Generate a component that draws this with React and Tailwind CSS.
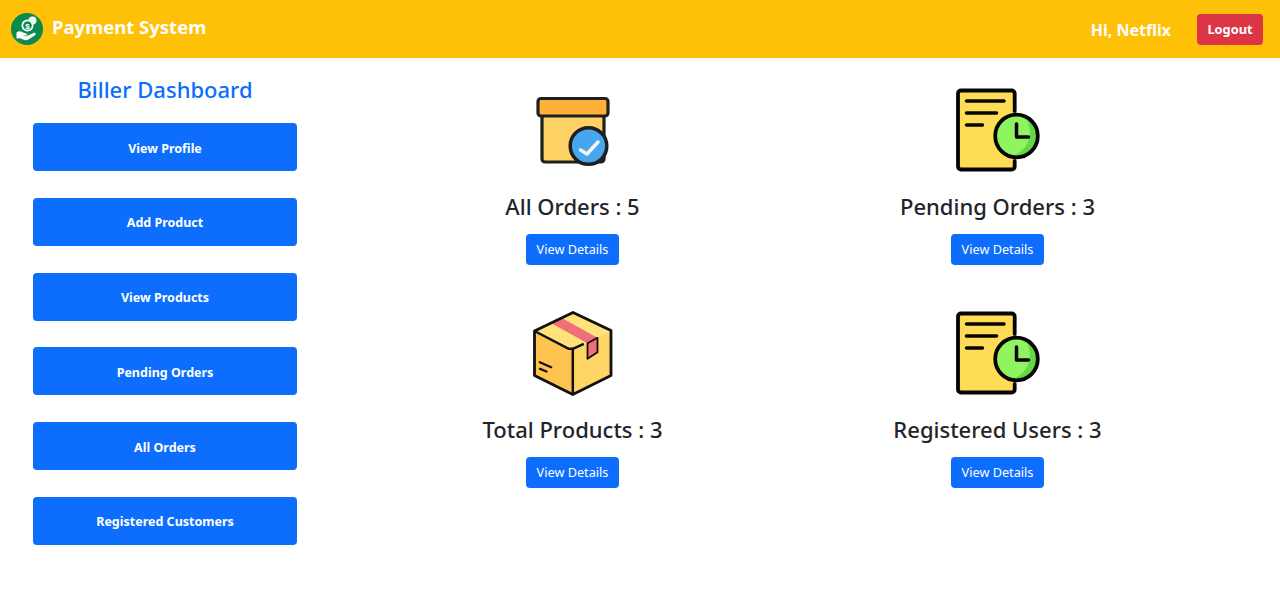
const font = { fontFamily: '"Noto Sans", sans-serif' };

function Logo() {
  return (
    <svg width="32" height="32" viewBox="0 0 32 32" className="shrink-0">
      <circle cx="16" cy="16" r="16" fill="#0b8a4d" />
      <circle cx="21.500" cy="7.500" r="4" fill="#eef7f1" />
      <circle cx="16.500" cy="12.500" r="6" fill="#ffffff" />
      <circle cx="16.500" cy="12.500" r="4.300" fill="#0b8a4d" />
      <text x="16.500" y="15.600" textAnchor="middle" fontSize="8" fontWeight="700" fill="#fff" fontFamily="Liberation Sans">$</text>
      <path d="M5.500 19.500c2-1.600 4.200-1.400 6-.2l3.400 1.100c1.600.5 1.400 2.300-.2 2.200l-3.200-.2 3.600.8 7.400-3.200c1.800-.7 3 1.100 1.500 2.200l-6.500 4.300c-1.300.8-2.500.9-4 .4l-4.500-1.600-3.500.2z" fill="#fff" />
    </svg>
  );
}

function CheckBox() {
  return (
    <svg width="90" height="90" viewBox="0 0 90 90">
      <path d="M14 30h62v44a3 3 0 0 1-3 3H17a3 3 0 0 1-3-3z" fill="#ffd266" stroke="#1f1f1f" strokeWidth="3.200" strokeLinejoin="round" />
      <rect x="10" y="13.500" width="70" height="17.500" rx="3" fill="#ffb03b" stroke="#1f1f1f" strokeWidth="3.200" />
      <circle cx="60.500" cy="61" r="18.300" fill="#46a6ee" stroke="#1f1f1f" strokeWidth="3.500" />
      <path d="M52.500 65l6.500 4 11-12" fill="none" stroke="#f5f5f5" strokeWidth="3.500" strokeLinecap="round" strokeLinejoin="round" />
    </svg>
  );
}

function DocClock() {
  return (
    <svg width="90" height="90" viewBox="0 0 90 90">
      <path d="M5 8.500a3 3 0 0 1 3-3h51a3 3 0 0 1 3 3v73a3 3 0 0 1-3 3H8a3 3 0 0 1-3-3z" fill="#ffdc55" />
      <path d="M61.700 26V8.500a3 3 0 0 0-3-3H8a3 3 0 0 0-3 3v73a3 3 0 0 0 3 3h50.700a3 3 0 0 0 3-3V76" fill="none" stroke="#050505" strokeWidth="3.800" strokeLinecap="round" />
      <path d="M13.500 16h37.500M13.500 28h30M13.500 40h16" fill="none" stroke="#050505" strokeWidth="3.500" strokeLinecap="round" />
      <circle cx="63.500" cy="51" r="21.300" fill="#8ff45f" />
      <path d="M72 32a21.300 21.300 0 0 1-15 39.500a25 25 0 0 0 15-39.500z" fill="#62d845" />
      <circle cx="63.500" cy="51" r="21.300" fill="none" stroke="#050505" strokeWidth="3.800" />
      <path d="M63.500 39v13h12" fill="none" stroke="#050505" strokeWidth="3.500" strokeLinecap="round" strokeLinejoin="round" />
    </svg>
  );
}

function Parcel() {
  return (
    <svg width="90" height="90" viewBox="0 0 90 90">
      <path d="M44.800 41L6.500 23v44.500l38.300 19z" fill="#ffc44f" />
      <path d="M44.800 41L83 22.500v45L44.800 86.500z" fill="#ffd666" />
      <path d="M6.500 23L45 4.500l38 18L44.800 41z" fill="#ffe27a" />
      <path d="M24.200 15.800l10-5.600 35.300 19.600v14.400l-10 6.600V35.200z" fill="#f0707a" />
      <path d="M6.500 23L45 4.500l38 18v45L44.800 86.500l-38.300-19z" fill="none" stroke="#111" strokeWidth="2.800" strokeLinejoin="round" />
      <path d="M6.500 23l34.300 17.800h4v45.700M44.800 40.800l11-5" fill="none" stroke="#111" strokeWidth="2.500" strokeLinejoin="round" />
      <path d="M59.500 35.200v15.600l10-6.600V29.800l-10 5.400z" fill="none" stroke="#111" strokeWidth="1.800" strokeLinejoin="round" />
      <path d="M11.800 54.200l11.400 5M11.800 60.800l6.700 2.700" fill="none" stroke="#111" strokeWidth="2.200" strokeLinecap="round" />
    </svg>
  );
}

const side = ["View Profile", "Add Product", "View Products", "Pending Orders", "All Orders", "Registered Customers"];

const cards = [
  { label: "All Orders : 5", Icon: CheckBox },
  { label: "Pending Orders : 3", Icon: DocClock },
  { label: "Total Products : 3", Icon: Parcel },
  { label: "Registered Users : 3", Icon: DocClock },
];

export default function App() {
  return (
    <div className="min-h-[604px] bg-white text-[#212529]" style={font}>
      <header className="h-[58px] bg-[#ffc107] flex items-center pl-[11px] pr-[17px] text-white">
        <Logo />
        <span className="ml-[9px] mb-[5px] text-[18.500px] font-bold">Payment System</span>
        <span className="ml-auto pt-[2px] text-[16px] font-bold">Hi, Netflix</span>
        <button className="ml-[26px] w-[66px] h-[31px] pt-[2px] rounded-[4px] bg-[#dc3545] text-[12.800px] font-bold text-white">Logout</button>
      </header>
      <main className="flex">
        <aside className="w-[360px] shrink-0 pl-[33px] pr-[63px] pt-[15px]">
          <h2 className="text-[22px] leading-[33px] text-center text-[#0d6efd] font-medium">Biller Dashboard</h2>
          <div className="mt-[17px] flex flex-col gap-[26.750px]">
            {side.map((s) => (
              <button key={s} className="h-[48px] pt-[4px] rounded-[4px] bg-[#0d6efd] text-white text-[12.500px] font-bold">{s}</button>
            ))}
          </div>
        </aside>
        <section className="w-[850px] grid grid-cols-2 content-start pt-[27px]">
          {cards.map(({ label, Icon }) => (
            <div key={label} className="flex flex-col items-center h-[222.500px]">
              <Icon />
              <h3 className="mt-[17px] text-[22px] leading-[29px] font-medium text-[#212529]">{label}</h3>
              <button className="mt-[13px] w-[93px] h-[31px] pt-[1px] rounded-[4px] bg-[#0d6efd] text-white text-[12.700px]">View Details</button>
            </div>
          ))}
        </section>
      </main>
    </div>
  );
}
